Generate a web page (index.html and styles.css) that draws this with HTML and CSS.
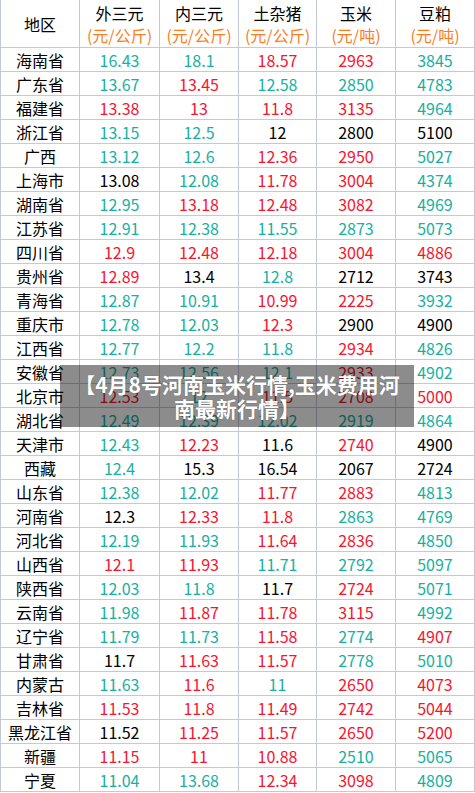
FILE: index.html
```html
<!DOCTYPE html>
<html lang="zh">
<head>
<meta charset="utf-8">
<link rel="stylesheet" href="styles.css">
</head>
<body>
<div class="wrap">
<table class="price">
<colgroup><col class="c1"><col class="c2"><col class="c3"><col class="c4"><col class="c5"><col class="c6"></colgroup>
<thead>
<tr class="hd"><th>地区</th><th>外三元<br><span class="u">(元/公斤)</span></th><th>内三元<br><span class="u">(元/公斤)</span></th><th>土杂猪<br><span class="u">(元/公斤)</span></th><th>玉米<br><span class="u">(元/吨)</span></th><th>豆粕<br><span class="u">(元/吨)</span></th></tr>
</thead>
<tbody>
<tr><td>海南省</td><td class="t">16.43</td><td class="t">18.1</td><td class="r">18.57</td><td class="r">2963</td><td class="t">3845</td></tr>
<tr><td>广东省</td><td class="t">13.67</td><td class="r">13.45</td><td class="t">12.58</td><td class="t">2850</td><td class="t">4783</td></tr>
<tr><td>福建省</td><td class="r">13.38</td><td class="r">13</td><td class="r">11.8</td><td class="r">3135</td><td class="t">4964</td></tr>
<tr><td>浙江省</td><td class="t">13.15</td><td class="t">12.5</td><td>12</td><td>2800</td><td>5100</td></tr>
<tr><td>广西</td><td class="t">13.12</td><td class="t">12.6</td><td class="r">12.36</td><td class="r">2950</td><td class="t">5027</td></tr>
<tr><td>上海市</td><td>13.08</td><td class="t">12.08</td><td class="r">11.78</td><td class="r">3004</td><td class="t">4374</td></tr>
<tr><td>湖南省</td><td class="t">12.95</td><td class="r">13.18</td><td class="r">12.48</td><td class="r">3082</td><td class="t">4969</td></tr>
<tr><td>江苏省</td><td class="t">12.91</td><td class="t">12.38</td><td class="t">11.55</td><td class="t">2873</td><td class="t">5073</td></tr>
<tr><td>四川省</td><td class="r">12.9</td><td class="r">12.48</td><td class="r">12.18</td><td class="r">3004</td><td class="r">4886</td></tr>
<tr><td>贵州省</td><td class="r">12.89</td><td>13.4</td><td class="t">12.8</td><td>2712</td><td>3743</td></tr>
<tr><td>青海省</td><td class="t">12.87</td><td class="t">10.91</td><td class="r">10.99</td><td class="r">2225</td><td class="t">3932</td></tr>
<tr><td>重庆市</td><td class="t">12.78</td><td class="t">12.03</td><td class="r">12.3</td><td>2900</td><td>4900</td></tr>
<tr><td>江西省</td><td class="t">12.77</td><td class="t">12.2</td><td class="t">11.8</td><td class="r">2934</td><td class="t">4826</td></tr>
<tr><td>安徽省</td><td class="t">12.73</td><td class="t">12.56</td><td class="t">12.1</td><td class="r">2933</td><td class="t">4902</td></tr>
<tr><td>北京市</td><td class="r">12.53</td><td class="t">12</td><td class="r">11.5</td><td class="r">2708</td><td class="r">5000</td></tr>
<tr><td>湖北省</td><td class="t">12.49</td><td class="t">12.39</td><td class="t">12.02</td><td class="t">2919</td><td class="t">4864</td></tr>
<tr><td>天津市</td><td class="t">12.43</td><td class="r">12.23</td><td>11.6</td><td class="r">2740</td><td>4900</td></tr>
<tr><td>西藏</td><td class="t">12.4</td><td>15.3</td><td>16.54</td><td>2067</td><td>2724</td></tr>
<tr><td>山东省</td><td class="t">12.38</td><td class="t">12.02</td><td class="r">11.77</td><td class="r">2883</td><td class="t">4813</td></tr>
<tr><td>河南省</td><td>12.3</td><td class="r">12.33</td><td class="r">11.8</td><td class="t">2863</td><td class="t">4769</td></tr>
<tr><td>河北省</td><td class="t">12.19</td><td class="t">11.93</td><td class="r">11.64</td><td class="r">2836</td><td class="t">4850</td></tr>
<tr><td>山西省</td><td class="r">12.1</td><td class="r">11.93</td><td class="t">11.71</td><td class="t">2792</td><td class="t">5097</td></tr>
<tr><td>陕西省</td><td class="t">12.03</td><td class="t">11.8</td><td>11.7</td><td class="r">2724</td><td class="t">5071</td></tr>
<tr><td>云南省</td><td class="t">11.98</td><td class="r">11.87</td><td class="r">11.78</td><td class="r">3115</td><td class="t">4992</td></tr>
<tr><td>辽宁省</td><td class="t">11.79</td><td class="t">11.73</td><td class="r">11.58</td><td class="t">2774</td><td class="r">4907</td></tr>
<tr><td>甘肃省</td><td>11.7</td><td class="r">11.63</td><td class="r">11.57</td><td class="t">2778</td><td class="t">5010</td></tr>
<tr><td>内蒙古</td><td class="t">11.63</td><td class="r">11.6</td><td class="t">11</td><td class="r">2650</td><td class="r">4073</td></tr>
<tr><td>吉林省</td><td class="r">11.53</td><td class="r">11.8</td><td class="r">11.49</td><td class="r">2742</td><td class="r">5044</td></tr>
<tr><td>黑龙江省</td><td>11.52</td><td class="r">11.25</td><td class="r">11.57</td><td class="r">2650</td><td class="r">5200</td></tr>
<tr><td>新疆</td><td class="r">11.15</td><td class="r">11</td><td class="r">10.88</td><td class="t">2510</td><td class="t">5065</td></tr>
<tr><td>宁夏</td><td class="t">11.04</td><td class="t">13.68</td><td class="r">12.34</td><td class="r">3098</td><td class="t">4809</td></tr>
</tbody>
</table>
<div class="caption">【4月8号河南玉米行情,玉米费用河南最新行情】</div>
</div>
</body>
</html>
```

FILE: styles.css
```css
html, body {
  margin: 0;
  padding: 0;
  background: #ffffff;
}
.wrap {
  position: relative;
  width: 475px;
  height: 793px;
  overflow: hidden;
}
.price {
  border-collapse: collapse;
  table-layout: fixed;
  width: 474px;
  font-family: "Noto Sans CJK SC", "Microsoft YaHei", sans-serif;
  font-size: 16px;
  color: #000;
}
.c1 { width: 79px; }
.c2 { width: 80px; }
.c3 { width: 79px; }
.c4 { width: 78px; }
.c5 { width: 79px; }
.c6 { width: 79px; }
.price th, .price td {
  border: 1px solid #c4c8dc;
  text-align: center;
  padding: 0;
  font-weight: normal;
  line-height: 22px;
  height: 23px;
}
.price thead th {
  border-top: none;
  height: 47px;
}
.price .u {
  color: #fb7d1e;
}
.price .t { color: #17b1a0; }
.price .r { color: #f8142e; }
.caption {
  position: absolute;
  left: 60px;
  top: 365px;
  width: 354px;
  height: 62px;
  box-sizing: border-box;
  padding: 0 14px;
  display: flex;
  align-items: center;
  justify-content: center;
  text-align: center;
  background: rgba(0, 0, 0, 0.45);
  color: #fff;
  font-family: "Noto Sans CJK SC", sans-serif;
  font-weight: bold;
  font-size: 21px;
  line-height: 24px;
  text-shadow: 0 0 1px rgba(0, 0, 0, 0.4);
}
```
